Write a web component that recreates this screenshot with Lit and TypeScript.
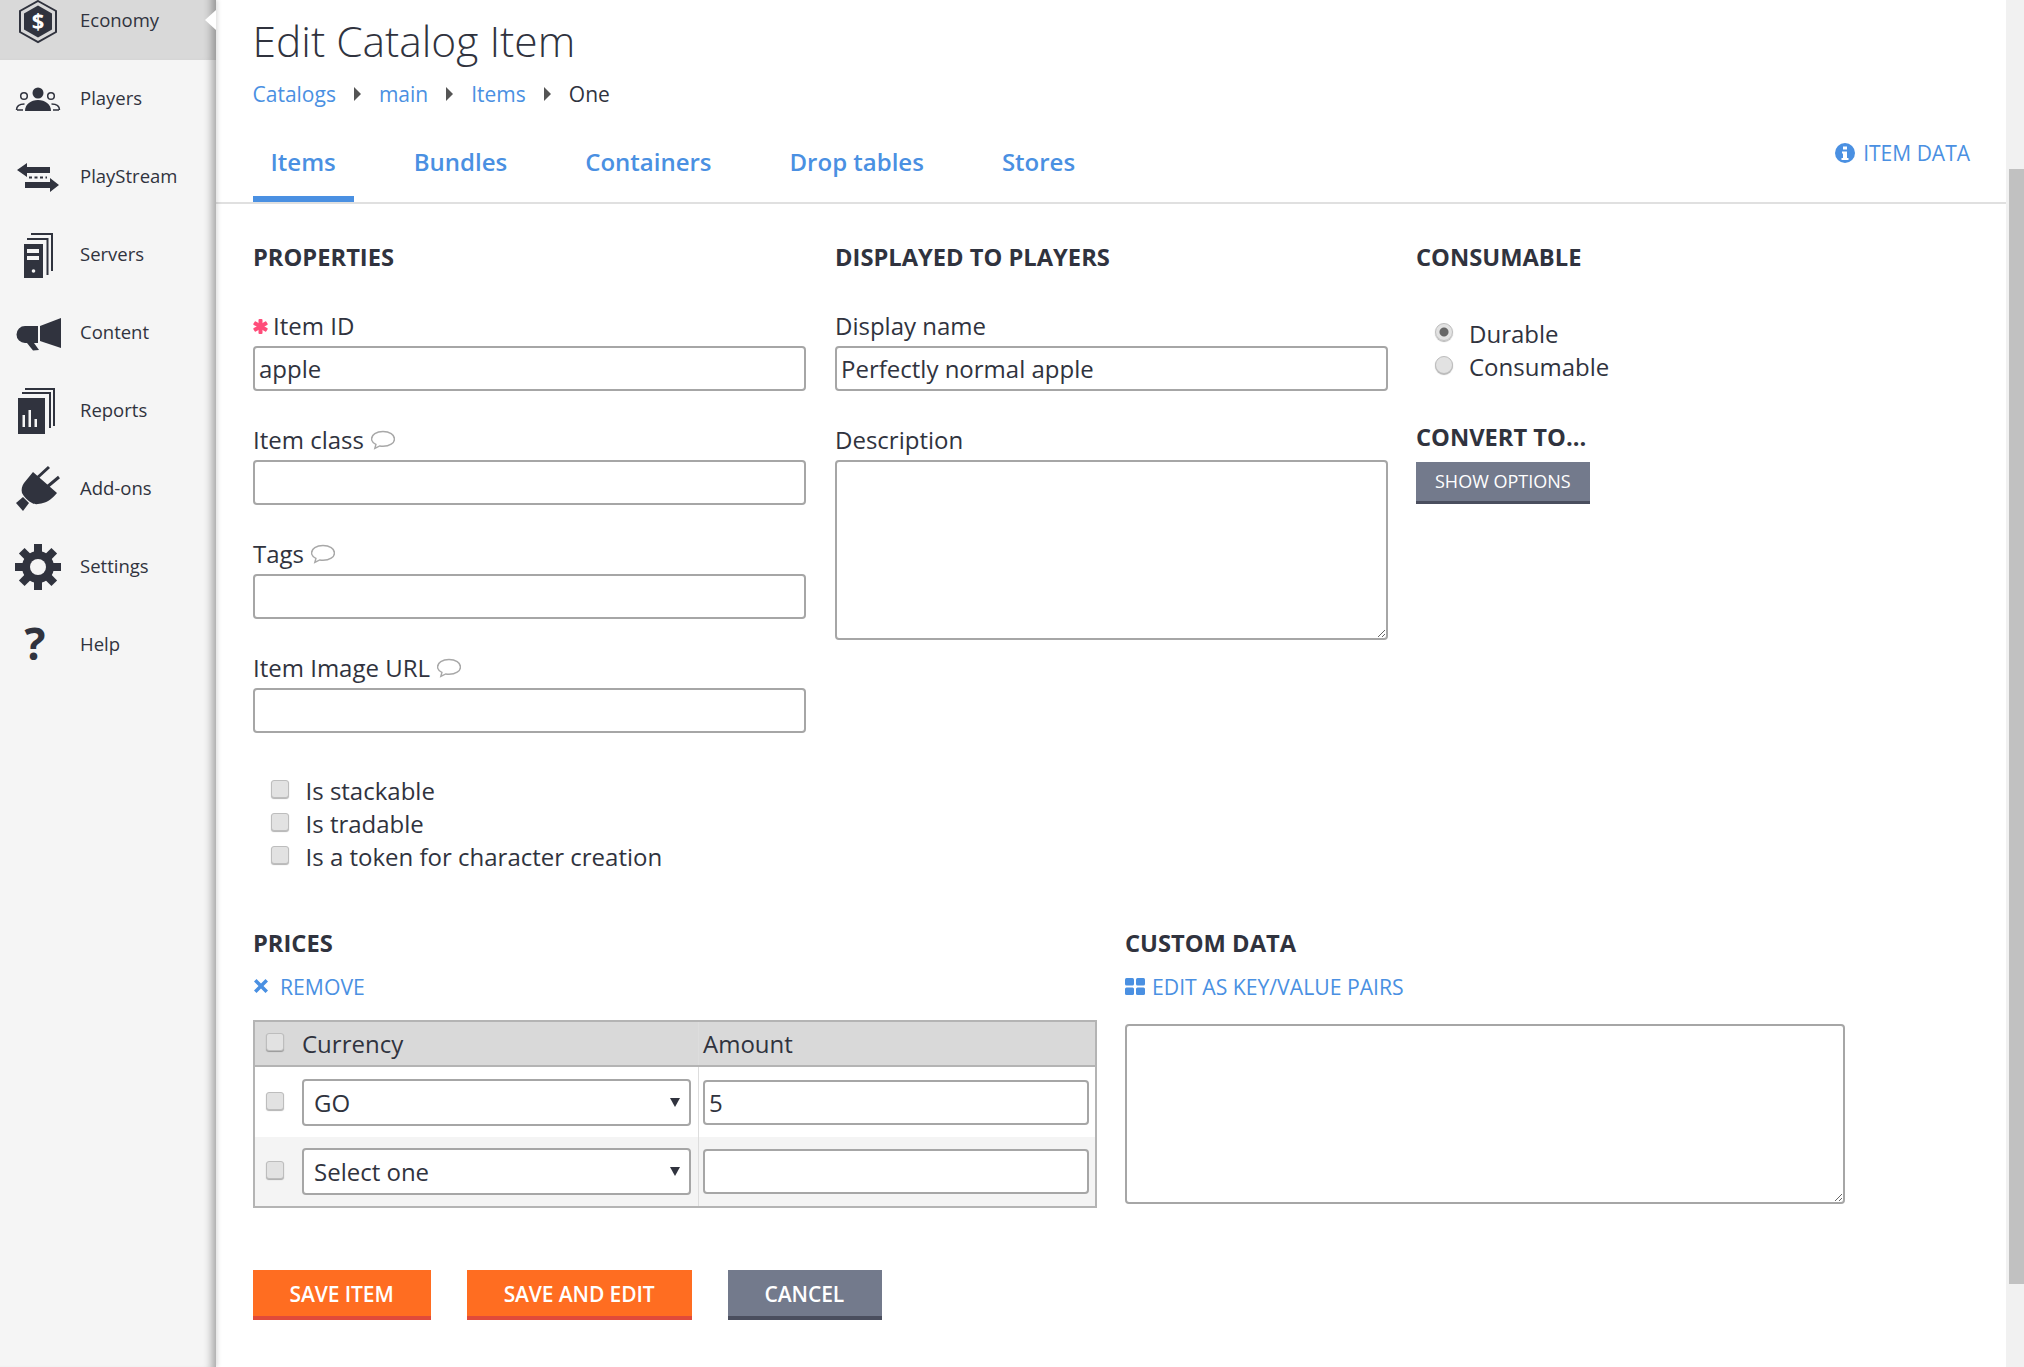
import { LitElement, html, svg, css } from 'lit';
import { customElement } from 'lit/decorators.js';

const gearTeeth = [0, 45, 90, 135, 180, 225, 270, 315];

const navIcons: Record<string, unknown> = {
  Economy: svg`
    <path d="M24 5l18 10v21L24 46 6 36V15z" fill="none" stroke="currentColor" stroke-width="2"/>
    <path d="M24 9.500l14 8v16l-14 8-14-8v-16z" fill="currentColor"/>
    <text x="24" y="33" text-anchor="middle" font-size="22" font-weight="700" fill="#fff" font-family="Open Sans">$</text>`,
  Players: svg`
    <circle cx="24" cy="19" r="5.500" fill="currentColor"/>
    <path d="M11 37c0-7 6-11 13-11s13 4 13 11z" fill="currentColor"/>
    <g fill="none" stroke="currentColor" stroke-width="1.500">
      <circle cx="10" cy="22" r="3.300"/><circle cx="37" cy="22" r="3.300"/>
      <path d="M2.500 36c0-4 3-6 8-6M9 36H3M45.500 36c0-4-3-6-8-6M39 36h6"/>
    </g>`,
  PlayStream: svg`
    <path d="M3 18l10-7v4h23v6H13v4zM45 33l-9 7v-4H11v-6h25v-4z" fill="currentColor"/>
    <path d="M15 25.500h18" stroke="currentColor" stroke-width="2" stroke-dasharray="3 2.500"/>`,
  Servers: svg`
    <rect x="10" y="14" width="19" height="34" fill="currentColor"/>
    <path d="M13 9h20.500v36M17 4h21v37" fill="none" stroke="currentColor" stroke-width="2"/>
    <path d="M13 19h12v4H13zM13 26h12v4H13z" fill="#f5f5f5"/>
    <circle cx="19.500" cy="41" r="1.800" fill="#f5f5f5"/>`,
  Content: svg`
    <path d="M26 18L47 10v30l-21-7zM24 18H11a8.500 8.500 0 0 0 0 17h13z" fill="currentColor"/>
    <path d="M13 35h7l5 7-6 .5z" fill="currentColor"/>`,
  Reports: svg`
    <rect x="4" y="12" width="27" height="36" fill="currentColor"/>
    <path d="M8 7h28v35M11 3h29v37" fill="none" stroke="currentColor" stroke-width="2"/>
    <path d="M8.500 29H11v12H8.500zM14.500 24H17v17h-2.500zM20.500 33H23v8h-2.500z" fill="#f5f5f5"/>`,
  'Add-ons': svg`
    <path d="M19 8l24 21c-4 5-9 9-14 10-4 1-8 2-11 0-4-2-8-6-10-10-1-4 0-7 2-10z" fill="currentColor"/>
    <path d="M2 39l7-6 6 6-6 8z" fill="currentColor"/>
    <path d="M23 14L35 3M33 23l12-10" stroke="currentColor" stroke-width="3" fill="none"/>`,
  Settings: svg`
    <circle cx="24" cy="25" r="16" fill="currentColor"/>
    ${gearTeeth.map(
      (a) => svg`<rect x="20" y="2" width="8" height="10" transform="rotate(${a} 24 25)" fill="currentColor"/>`
    )}
    <circle cx="24" cy="25" r="8" fill="#f5f5f5"/>`,
  Help: svg`<text x="21" y="40" text-anchor="middle" font-size="44" font-weight="700" fill="currentColor" font-family="Open Sans">?</text>`,
};

const navItems = ['Economy', 'Players', 'PlayStream', 'Servers', 'Content', 'Reports', 'Add-ons', 'Settings', 'Help'];
const tabs = ['Items', 'Bundles', 'Containers', 'Drop tables', 'Stores'];

const bubble = html`<svg class="bubble" viewBox="1 1.500 22 17.500" width="24" height="20">
  <path d="M12 2.500c6 0 10.500 3 10.500 6.800s-4.500 6.700-10.500 6.700c-1 0-2-.1-3-.3L4.500 18l1-3.800c-2.500-1.200-4-3-4-4.900 0-3.800 4.500-6.800 10.500-6.800z" fill="none" stroke="#a8a8a8" stroke-width="1.300"/>
</svg>`;

const asterisk = html`<svg viewBox="0 0 15 15" width="15" height="15">
  <g fill="#ff4d7a">
    <rect x="5.500" y="0" width="4" height="15" rx="1" />
    <rect x="5.500" y="0" width="4" height="15" rx="1" transform="rotate(60 7.500 7.500)" />
    <rect x="5.500" y="0" width="4" height="15" rx="1" transform="rotate(120 7.500 7.500)" />
  </g>
</svg>`;

@customElement('app-root')
export class AppRoot extends LitElement {
  static styles = css`
    :host {
      display: flex;
      width: 2024px;
      height: 1367px;
      overflow: hidden;
      background: #fff;
      color: #30333e;
      font-family: 'Open Sans', sans-serif;
      font-size: 24px;
    }

    * {
      box-sizing: border-box;
    }

    .sidebar {
      position: relative;
      flex: 0 0 216px;
      background: #f5f5f5;
      box-shadow: inset -11px 0 9px -7px rgba(0, 0, 0, 0.33), 2px 0 4px rgba(0, 0, 0, 0.12);
    }

    .nav-list {
      margin-top: -19px;
    }

    .nav-item {
      position: relative;
      display: flex;
      align-items: center;
      height: 78px;
      padding-left: 14px;
      font-size: 18.5px;
    }

    .nav-item span {
      margin-bottom: 2px;
    }

    .nav-item.active {
      height: 79px;
      margin-bottom: -1px;
      padding-bottom: 1px;
      background: #d9d9d9;
      box-shadow: inset -11px 0 9px -7px rgba(0, 0, 0, 0.33);
    }

    .nav-item.active::after {
      content: '';
      position: absolute;
      right: 0;
      top: 29px;
      border-style: solid;
      border-width: 10px 11px 10px 0;
      border-color: transparent #fff transparent transparent;
    }

    .nav-item svg {
      flex: 0 0 48px;
      margin-right: 18px;
      overflow: visible;
    }

    .main {
      flex: 1;
      min-width: 0;
    }

    .page-head {
      padding: 14px 36.5px 0;
      height: 122px;
    }

    h1 {
      margin: 0 0 11px;
      font-size: 42.5px;
      line-height: 54px;
      font-weight: 300;
    }

    .crumbs {
      display: flex;
      align-items: center;
      gap: 18px;
      font-size: 21px;
      line-height: 30px;
    }

    .crumbs a {
      color: #4a90e2;
    }

    .crumb-sep {
      border-style: solid;
      border-width: 7px 0 7px 7px;
      border-color: transparent transparent transparent #555;
    }

    .tab-bar {
      display: flex;
      justify-content: space-between;
      height: 82px;
      padding: 0 36px 0 36.5px;
      border-bottom: 2px solid #e0e0e0;
    }

    .tabs {
      display: flex;
      gap: 42px;
    }

    .tab {
      height: 80px;
      padding: 24px 18px 0;
      font-size: 24px;
      line-height: 32px;
      font-weight: 600;
      color: #4a90e2;
    }

    .tab.active {
      border-bottom: 6px solid #4a90e2;
    }

    .item-data {
      display: flex;
      align-items: center;
      gap: 8px;
      margin-top: 16px;
      height: 30px;
      font-size: 21px;
      font-weight: 500;
      color: #4a90e2;
    }

    .form {
      padding: 38px 0 0 37px;
    }

    .columns {
      display: grid;
      grid-template-columns: 553px 553px 1fr;
      gap: 29px;
    }

    .columns > section:last-child {
      margin-left: -1px;
    }

    h2 {
      margin: 0;
      font-size: 23.7px;
      line-height: 30px;
      font-weight: 700;
    }

    .heading-gap {
      margin-bottom: 39px;
    }

    .field {
      margin-bottom: 34px;
    }

    .field label {
      display: flex;
      align-items: center;
      gap: 7px;
      height: 30px;
      margin-bottom: 5px;
      line-height: 30px;
    }

    .field label svg:first-child {
      margin-right: -2px;
    }

    input[type='text'],
    textarea,
    select {
      display: block;
      width: 100%;
      height: 45px;
      margin: 0;
      padding: 0 4px;
      border: 2px solid #a6a6a6;
      border-radius: 4px;
      background: #fff;
      color: #30333e;
      font: inherit;
      outline: none;
    }

    textarea.desc {
      height: 180px;
    }

    textarea.custom {
      height: 180px;
      margin-top: 23px;
    }

    .checks {
      margin-top: 41px;
      padding-left: 18px;
    }

    .choice {
      display: flex;
      align-items: center;
      gap: 16.5px;
      height: 33px;
    }

    input[type='checkbox'],
    input[type='radio'] {
      appearance: none;
      flex: none;
      width: 18px;
      height: 18px;
      margin: -3px 0 0;
      border: 1px solid #bdbdbd;
      border-radius: 3px;
      background: #e2e2e2;
      box-shadow: 0 1px 1px rgba(0, 0, 0, 0.3);
    }

    input[type='radio'] {
      border-radius: 50%;
    }

    input[type='radio']:checked {
      background: radial-gradient(circle, #666 0 4px, #e2e2e2 5px);
    }

    .radios {
      margin: 45px 0 0 19px;
    }

    .radios .choice {
      gap: 16px;
    }

    .convert {
      margin-top: 39px;
    }

    .btn-small {
      display: inline-block;
      margin-top: 10px;
      height: 42px;
      padding: 0 19px;
      background: #737a8c;
      border-bottom: 3px solid #4a4e5e;
      color: #fff;
      font-size: 18px;
      line-height: 39px;
    }

    .lower {
      display: grid;
      grid-template-columns: 844px 720px;
      gap: 28px;
      margin-top: 55px;
    }

    .link {
      display: flex;
      align-items: center;
      gap: 11px;
      height: 30px;
      margin-top: 13px;
      color: #4a90e2;
      font-size: 21.2px;
      font-weight: 500;
    }

    .link.key-value {
      gap: 7px;
    }

    .prices {
      margin-top: 19px;
      border: 2px solid #b4b4b4;
    }

    .price-row {
      display: grid;
      grid-template-columns: 47px 396px 1fr;
      align-items: center;
      height: 70px;
    }

    .price-row.head {
      height: 45px;
      background: #d9d9d9;
      border-bottom: 2px solid #b4b4b4;
    }

    .price-row.shaded {
      background: #f4f4f4;
      height: 69px;
    }

    .price-row > div:first-child {
      padding-left: 11px;
    }

    .price-row input[type='checkbox'] {
      display: block;
    }

    .amount {
      align-self: stretch;
      display: flex;
      align-items: center;
      padding: 0 6px 0 4px;
      border-left: 1px solid #ddd;
    }

    .amount input {
      height: 45px;
    }

    .select-wrap {
      position: relative;
      margin-right: 7px;
    }

    select {
      appearance: none;
      height: 47px;
      padding-left: 10px;
    }

    .select-wrap::after {
      content: '';
      position: absolute;
      right: 11px;
      top: 19px;
      border-style: solid;
      border-width: 9px 5px 0;
      border-color: #30333e transparent transparent;
    }

    .actions {
      display: flex;
      gap: 36px;
      margin-top: 62px;
    }

    .btn {
      height: 50px;
      padding: 0 37.5px 0 36.500px;
      color: #fff;
      font-size: 21px;
      font-weight: 600;
      line-height: 48px;
      letter-spacing: -0.1px;
    }

    .btn.primary {
      background: #ff6d21;
      border-bottom: 4px solid #e04a3a;
    }

    .btn.muted {
      background: #737a8c;
      border-bottom: 4px solid #4a4e5e;
    }

    .scrollbar {
      flex: 0 0 18px;
      background: #f1f1f1;
      padding: 169px 0 0 3px;
    }

    .thumb {
      height: 1115px;
      background: #c1c1c1;
    }
  `;

  renderField(name: string, value = '', hint = true, required = false) {
    return html`
      <div class="field">
        <label>${required ? asterisk : ''}${name}${hint ? bubble : ''}</label>
        <input type="text" .value=${value} />
      </div>
    `;
  }

  renderPriceRow(value: string, amount: string, shaded: boolean) {
    return html`
      <div class="price-row ${shaded ? 'shaded' : ''}">
        <div><input type="checkbox" /></div>
        <div class="select-wrap">
          <select>
            <option>${value}</option>
          </select>
        </div>
        <div class="amount"><input type="text" .value=${amount} /></div>
      </div>
    `;
  }

  render() {
    return html`
      <nav class="sidebar">
        <div class="nav-list">
          ${navItems.map(
            (name, i) => html`
              <div class="nav-item ${i === 0 ? 'active' : ''}">
                <svg viewBox="0 0 48 48" width="48" height="48">${navIcons[name]}</svg>
                <span>${name}</span>
              </div>
            `
          )}
        </div>
      </nav>

      <main class="main">
        <header class="page-head">
          <h1>Edit Catalog Item</h1>
          <div class="crumbs">
            <a>Catalogs</a><span class="crumb-sep"></span> <a>main</a><span class="crumb-sep"></span>
            <a>Items</a><span class="crumb-sep"></span> <span>One</span>
          </div>
        </header>

        <div class="tab-bar">
          <div class="tabs">
            ${tabs.map((t, i) => html`<div class="tab ${i === 0 ? 'active' : ''}">${t}</div>`)}
          </div>
          <div class="item-data">
            <svg viewBox="0 0 20 20" width="20" height="20">
              <circle cx="10" cy="10" r="10" fill="#4a90e2" />
              <path d="M8 3.500h4v3H8zM7 8.500h5v6.500h1.500v2h-7v-2H8v-4.500H7z" fill="#fff" />
            </svg>
            ITEM DATA
          </div>
        </div>

        <div class="form">
          <div class="columns">
            <section>
              <h2 class="heading-gap">PROPERTIES</h2>
              ${this.renderField('Item ID', 'apple', false, true)} ${this.renderField('Item class')}
              ${this.renderField('Tags')} ${this.renderField('Item Image URL')}
              <div class="checks">
                <div class="choice"><input type="checkbox" />Is stackable</div>
                <div class="choice"><input type="checkbox" />Is tradable</div>
                <div class="choice"><input type="checkbox" />Is a token for character creation</div>
              </div>
            </section>

            <section>
              <h2 class="heading-gap">DISPLAYED TO PLAYERS</h2>
              ${this.renderField('Display name', 'Perfectly normal apple', false)}
              <div class="field">
                <label>Description</label>
                <textarea class="desc"></textarea>
              </div>
            </section>

            <section>
              <h2>CONSUMABLE</h2>
              <div class="radios">
                <div class="choice"><input type="radio" name="kind" checked />Durable</div>
                <div class="choice"><input type="radio" name="kind" />Consumable</div>
              </div>
              <h2 class="convert">CONVERT TO...</h2>
              <div class="btn-small">SHOW OPTIONS</div>
            </section>
          </div>

          <div class="lower">
            <section>
              <h2>PRICES</h2>
              <div class="link">
                <svg viewBox="0 0 16 16" width="16" height="16">
                  <path d="M3.500 1L8 5.500 12.500 1 15 3.500 10.500 8l4.500 4.500-2.500 2.500L8 10.500 3.500 15 1 12.500 5.500 8 1 3.500z" fill="#4a90e2" />
                </svg>
                REMOVE
              </div>
              <div class="prices">
                <div class="price-row head">
                  <div><input type="checkbox" /></div>
                  <div>Currency</div>
                  <div class="amount">Amount</div>
                </div>
                ${this.renderPriceRow('GO', '5', false)} ${this.renderPriceRow('Select one', '', true)}
              </div>
            </section>

            <section>
              <h2>CUSTOM DATA</h2>
              <div class="link key-value">
                <svg viewBox="0 0 20 17" width="20" height="17">
                  <g fill="#4a90e2">
                    <rect width="9" height="7.500" rx="1.500" />
                    <rect x="11" width="9" height="7.500" rx="1.500" />
                    <rect y="9.500" width="9" height="7.500" rx="1.500" />
                    <rect x="11" y="9.500" width="9" height="7.500" rx="1.500" />
                  </g>
                </svg>
                EDIT AS KEY/VALUE PAIRS
              </div>
              <textarea class="custom"></textarea>
            </section>
          </div>

          <div class="actions">
            <div class="btn primary">SAVE ITEM</div>
            <div class="btn primary">SAVE AND EDIT</div>
            <div class="btn muted">CANCEL</div>
          </div>
        </div>
      </main>

      <div class="scrollbar"><div class="thumb"></div></div>
    `;
  }
}
